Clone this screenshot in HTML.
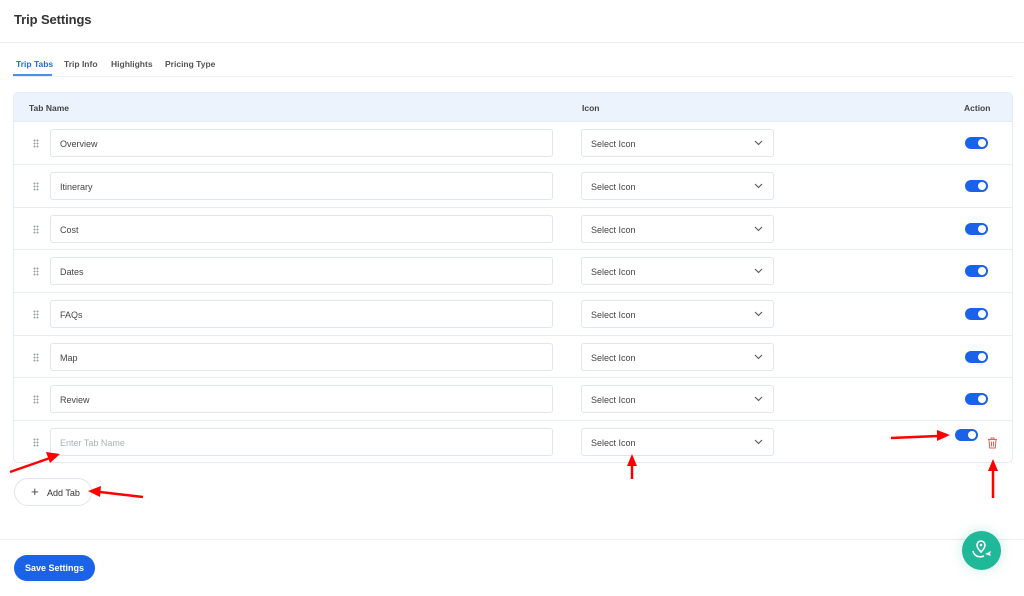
<!DOCTYPE html>
<html><head><meta charset="utf-8"><style>
*{box-sizing:border-box;margin:0;padding:0}
body{width:1024px;height:596px;background:#fff;font-family:"Liberation Sans",sans-serif;position:relative;overflow:hidden;color:#333}
.abs{position:absolute}
.title{left:14px;top:12px;font-size:13px;font-weight:600;color:#333;letter-spacing:-0.1px}
.hr{left:0;width:1024px;height:1px;background:#eceef2}
.tab{top:59px;font-size:8.5px;font-weight:bold;color:#555}
.table{left:13px;top:92px;width:1000px;height:371px;border:1px solid #e3ebf7;border-radius:5px;overflow:hidden}
.thead{position:absolute;left:0;top:0;width:100%;height:29px;background:#edf3fd;border-bottom:1px solid #e3ebf7;font-size:8.5px;color:#444;font-weight:600}
.row{position:absolute;left:0;width:100%;border-bottom:1px solid #e7edf7}
.grip{position:absolute;left:19px;width:6px;height:9px;background:radial-gradient(circle,#9aa0a8 0.9px,transparent 1.1px) 0 0/3px 3px}
.inp{position:absolute;left:36px;width:503px;height:28px;border:1px solid #dfe6f0;border-radius:3px;font-size:9px;color:#444;padding:9px 0 0 9px}
.sel{position:absolute;left:567px;width:193px;height:28px;border:1px solid #dfe6f0;border-radius:3px;font-size:9px;color:#444;padding:9px 0 0 9px}
.sel svg{position:absolute;right:10px;top:10px}
.tog{position:absolute;width:23px;height:12px;border-radius:6px;background:#1a63e8}
.tog:after{content:"";position:absolute;right:2px;top:2px;width:8px;height:8px;border-radius:50%;background:#fff}
</style></head><body>
<div class="abs title">Trip Settings</div>
<div class="abs hr" style="top:42px"></div>
<div class="abs tab" style="left:16px;color:#1a6fe8">Trip Tabs</div>
<div class="abs" style="left:13px;top:74px;width:39px;height:2px;background:#4a8ff0"></div>
<div class="abs tab" style="left:64px">Trip Info</div>
<div class="abs tab" style="left:111px">Highlights</div>
<div class="abs tab" style="left:165px">Pricing Type</div>
<div class="abs hr" style="top:76px;left:13px;width:1000px;height:1px"></div>

<div class="abs table">
<div class="thead"><span class="abs" style="left:15px;top:10px">Tab Name</span><span class="abs" style="left:568px;top:10px">Icon</span><span class="abs" style="left:950px;top:10px">Action</span></div>
</div>
<script>
var names=["Overview","Itinerary","Cost","Dates","FAQs","Map","Review",""];
var tops=[121,164,207,249,292,335,377,420];
var h='';
for(var i=0;i<8;i++){var t=tops[i]-92;var hh=(i<7?tops[i+1]:462)-tops[i];
h+='<div class="row" style="top:'+t+'px;height:'+hh+'px;'+(i==7?'border:none':'')+'">'+
'<div class="grip" style="top:'+17+'px"></div>'+
'<div class="inp" style="top:7px;'+(i==7?'color:#aab0b8':'')+'">'+(names[i]||'Enter Tab Name')+'</div>'+
'<div class="sel" style="top:7px">Select Icon<svg width="9" height="6" viewBox="0 0 9 6"><path d="M1 1l3.5 3.5L8 1" fill="none" stroke="#555" stroke-width="1.1"/></svg></div>'+
(i<7?'<div class="tog" style="left:951px;top:15px"></div>':'<div class="tog" style="left:941px;top:8px"></div>')+
'</div>';}
document.querySelector('.table').insertAdjacentHTML('beforeend',h);
</script>
<svg class="abs" style="left:987px;top:437px" width="11" height="12" viewBox="0 0 11 12"><path d="M1 2.5h9M4 2.5V1h3v1.5M2 2.5l.7 8.5h5.6L9 2.5M4.5 4.5v5M6.5 4.5v5" fill="none" stroke="#f05a5a" stroke-width="1"/></svg>

<div class="abs" style="left:14px;top:478px;width:78px;height:28px;border:1px solid #e0e6ef;border-radius:14px;font-size:9px;color:#333">
<span class="abs" style="left:16px;top:5px;font-size:13px;color:#444">+</span><span class="abs" style="left:32px;top:9px">Add Tab</span></div>
<div class="abs hr" style="top:539px"></div>
<div class="abs" style="left:14px;top:555px;width:81px;height:26px;border-radius:13px;background:#1a63e8;color:#fff;font-size:9px;font-weight:bold;text-align:center;line-height:26px">Save Settings</div>
<div class="abs" style="left:962px;top:531px;width:39px;height:39px;border-radius:50%;background:#1fb898;box-shadow:0 0 12px rgba(31,184,152,.25)">
<svg width="39" height="39" viewBox="0 0 39 39"><path d="M19 21c-3-3-4-5-4-7a4 4 0 018 0c0 2-1 4-4 7z" fill="none" stroke="#fff" stroke-width="1.6"/><circle cx="19" cy="14" r="1.3" fill="#fff"/><path d="M11 20c1 5 6 7 11 5" fill="none" stroke="#fff" stroke-width="1.6"/><path d="M23 23l6-3-1 3 1 2z" fill="#fff"/></svg></div>

<svg class="abs" style="left:0;top:0" width="1024" height="596">
<g stroke="#f00" stroke-width="2.5" fill="#f00">
<line x1="10" y1="472" x2="50" y2="458"/><polygon points="60,454 46,452 50,463" stroke="none"/>
<line x1="143" y1="497" x2="100" y2="492"/><polygon points="88,491 101,486 100,497" stroke="none"/>
<line x1="632" y1="479" x2="632" y2="465"/><polygon points="632,454 627,466 637,466" stroke="none"/>
<line x1="891" y1="438" x2="938" y2="436"/><polygon points="950,435 937,430 937,441" stroke="none"/>
<line x1="993" y1="498" x2="993" y2="470"/><polygon points="993,459 988,471 998,471" stroke="none"/>
</g></svg>
</body></html>
